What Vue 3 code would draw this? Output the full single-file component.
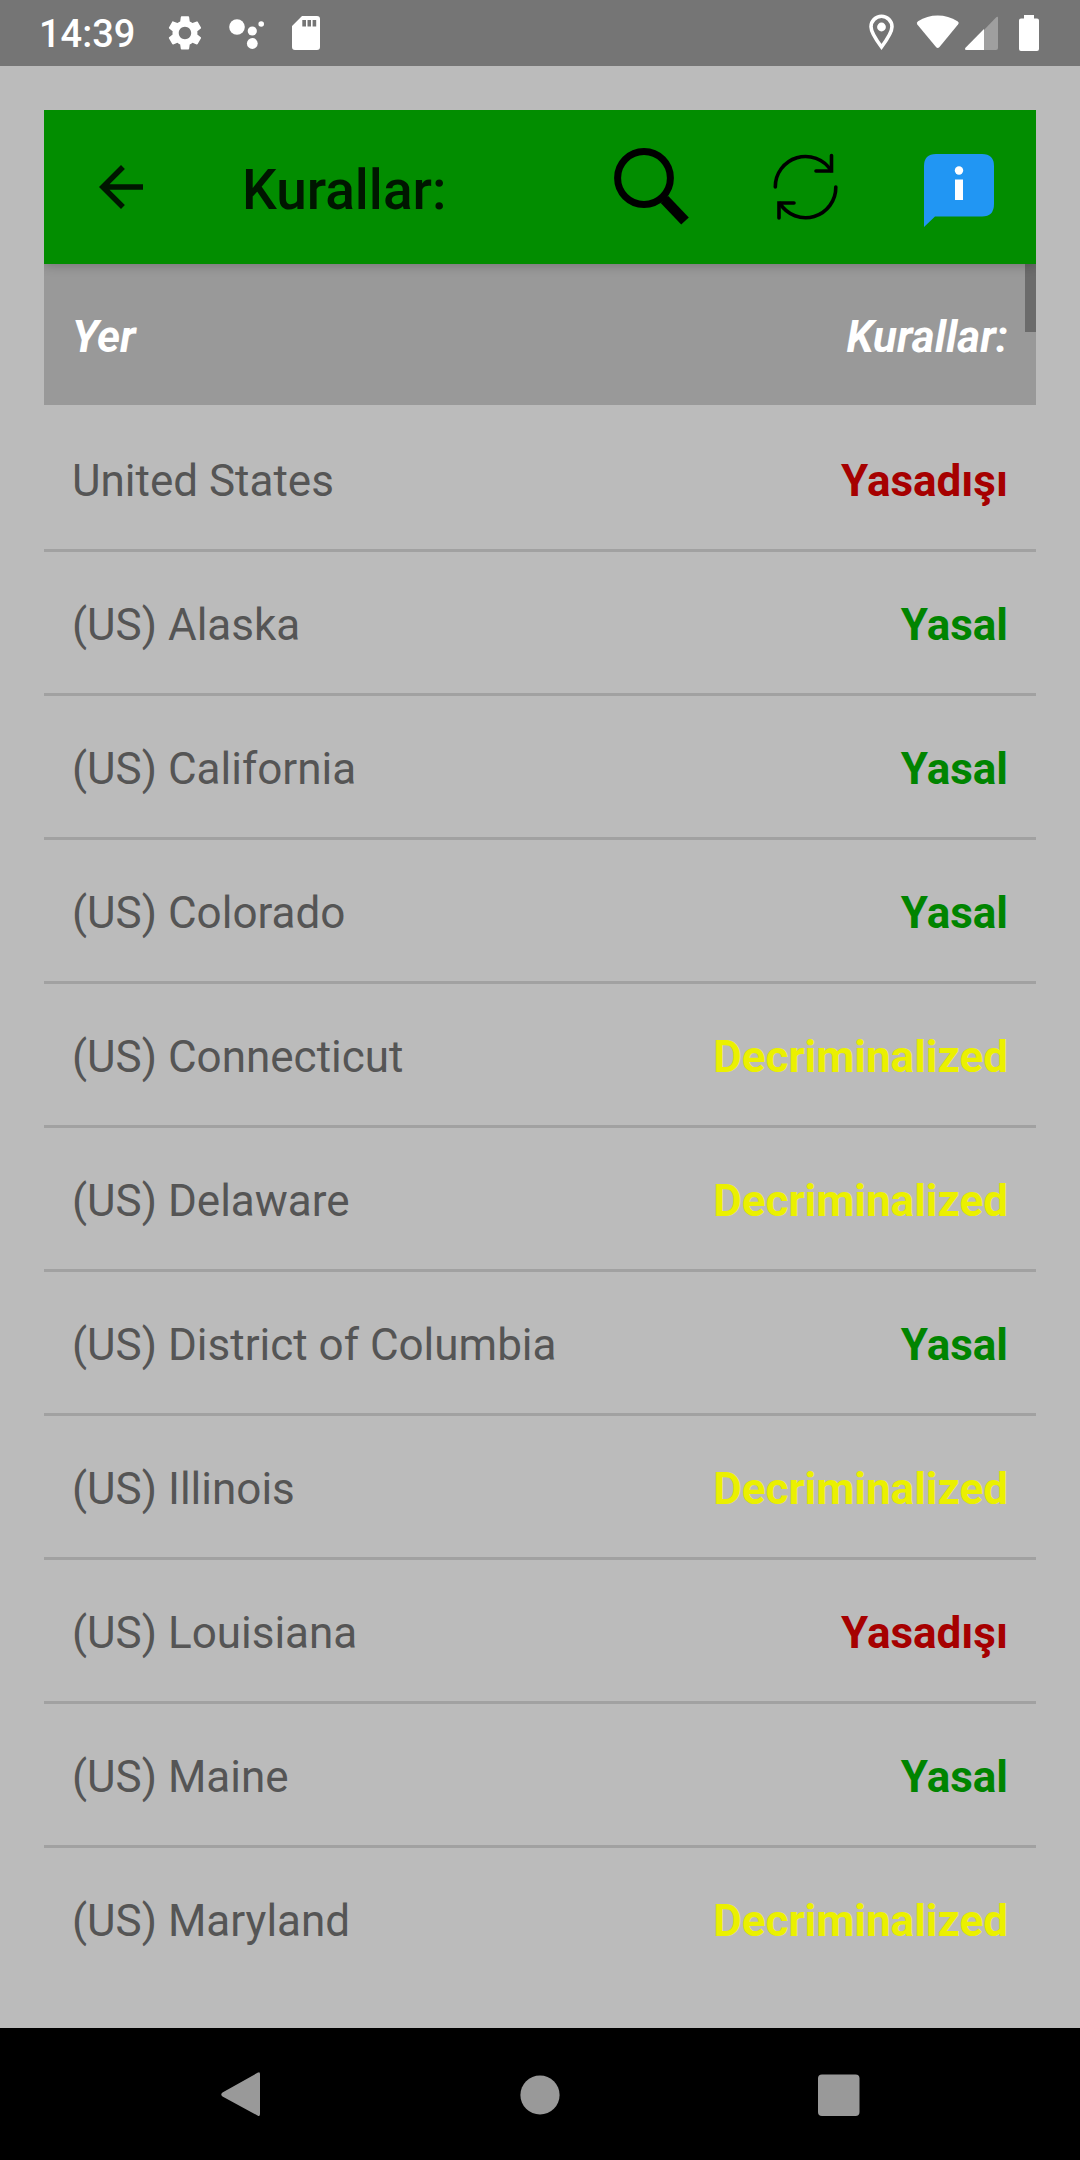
<script setup>
const rules = [
  { place: 'United States', status: 'Yasadışı', tone: 'illegal' },
  { place: '(US) Alaska', status: 'Yasal', tone: 'legal' },
  { place: '(US) California', status: 'Yasal', tone: 'legal' },
  { place: '(US) Colorado', status: 'Yasal', tone: 'legal' },
  { place: '(US) Connecticut', status: 'Decriminalized', tone: 'partial' },
  { place: '(US) Delaware', status: 'Decriminalized', tone: 'partial' },
  { place: '(US) District of Columbia', status: 'Yasal', tone: 'legal' },
  { place: '(US) Illinois', status: 'Decriminalized', tone: 'partial' },
  { place: '(US) Louisiana', status: 'Yasadışı', tone: 'illegal' },
  { place: '(US) Maine', status: 'Yasal', tone: 'legal' },
  { place: '(US) Maryland', status: 'Decriminalized', tone: 'partial' },
]
</script>

<template>
  <div class="screen">
    <header class="status-bar">
      <time class="clock">14:39</time>
      <div class="notifications">
        <svg width="34" height="38" viewBox="0 0 34 38" fill="#fff" aria-hidden="true">
          <path transform="translate(-3.8 -1.8) scale(1.73)" d="M19.14 12.94c.04-.3.06-.61.06-.94 0-.32-.02-.64-.07-.94l2.03-1.58c.18-.14.23-.41.12-.61l-1.92-3.32c-.12-.22-.37-.29-.59-.22l-2.39.96c-.5-.38-1.03-.7-1.62-.94l-.36-2.54c-.04-.24-.24-.41-.48-.41h-3.84c-.24 0-.43.17-.47.41l-.36 2.54c-.59.24-1.13.57-1.62.94l-2.39-.96c-.22-.08-.47 0-.59.22L2.74 8.87c-.12.21-.08.47.12.61l2.03 1.58c-.05.3-.09.63-.09.94s.02.64.07.94l-2.03 1.58c-.18.14-.23.41-.12.61l1.92 3.32c.12.22.37.29.59.22l2.39-.96c.5.38 1.03.7 1.62.94l.36 2.54c.05.24.24.41.48.41h3.84c.24 0 .44-.17.47-.41l.36-2.54c.59-.24 1.13-.56 1.62-.94l2.39.96c.22.08.47 0 .59-.22l1.92-3.32c.12-.22.07-.47-.12-.61l-2.01-1.58zM12 15.6c-1.98 0-3.6-1.62-3.6-3.6s1.62-3.6 3.6-3.6 3.6 1.62 3.6 3.6-1.62 3.6-3.6 3.6z" />
        </svg>
        <svg width="36" height="38" viewBox="0 0 36 38" fill="#fff" aria-hidden="true">
          <circle cx="8" cy="13" r="7.8" /><circle cx="23.3" cy="17" r="4.6" />
          <circle cx="23.3" cy="29.5" r="5.4" /><circle cx="32.2" cy="10" r="2.8" />
        </svg>
        <svg width="28" height="38" viewBox="0 0 28 38" aria-hidden="true">
          <path fill="#fff" fill-rule="evenodd" d="M10 2H25Q28 2 28 5V33Q28 36 25 36H3Q0 36 0 33V12ZM10.300 6V12.500H14V6ZM15.500 6V12.500H19V6ZM20.600 6V12.500H24.200V6Z" />
        </svg>
      </div>
      <div class="system">
        <svg width="26" height="38" viewBox="0 0 26 38" aria-hidden="true">
          <path fill="none" stroke="#fff" stroke-width="3.6" d="M12.500 33C8 27 2 19 2 12.800A10.500 10.500 0 0 1 23 12.800C23 19 17 27 12.500 33Z" />
          <circle cx="12.500" cy="13" r="4.400" fill="#fff" />
        </svg>
        <svg width="44" height="38" viewBox="0 0 44 38" aria-hidden="true">
          <path fill="#fff" d="M1.300 10.500Q0 8.500 2 7.200Q11 1.500 21.700 1.500T41.500 7.200Q43.500 8.500 42 10.500L23.500 33Q21.700 35 20 33Z" />
        </svg>
        <svg class="signal" width="34" height="38" viewBox="0 0 34 38" aria-hidden="true">
          <path fill="#9f9f9f" d="M19 17L31.500 4Q34 1.500 34 4V34Q34 36 32 36H19Z" />
          <path fill="#fff" d="M20 15V36H2.500Q0 36 1.500 33.800Z" />
        </svg>
        <svg width="20" height="38" viewBox="0 0 20 38" aria-hidden="true">
          <path fill="#fff" d="M5 1H15V4.500H18Q20 4.500 20 6.500V35Q20 37 18 37H2Q0 37 0 35V6.500Q0 4.500 2 4.500H5Z" />
        </svg>
      </div>
    </header>

    <main class="content">
      <section class="card">
        <div class="toolbar">
          <button type="button" aria-label="Geri">
            <svg width="66" height="66" viewBox="0 0 24 24" fill="#001600">
              <path d="M20 11H7.830l5.590-5.590L12 4l-8 8 8 8 1.410-1.410L7.830 13H20z" />
            </svg>
          </button>
          <h1 class="title">Kurallar:</h1>
          <div class="actions">
            <button type="button" aria-label="Ara">
              <svg width="74" height="84" viewBox="0 0 74 84" fill="none" stroke="#000">
                <circle cx="30" cy="33" r="26.400" stroke-width="7" />
                <path d="M47 50L54 57" stroke-width="7" />
                <path d="M50.500 54.500L71 76" stroke-width="10.500" />
              </svg>
            </button>
            <button type="button" aria-label="Yenile">
              <svg width="68" height="84" viewBox="0 0 68 84" fill="none" stroke="#000" stroke-width="3.600" stroke-linecap="round">
                <path d="M3.300 42A30.200 30.200 0 0 1 59 25.500M63.800 42A30.200 30.200 0 0 1 8 58.500" />
                <path d="M59.500 10.500V26H44M7 73V58H22" />
              </svg>
            </button>
            <button type="button" aria-label="Bilgi">
              <svg width="70" height="84" viewBox="0 0 70 84">
                <path fill="#2196f3" d="M12 9H58Q70 9 70 21V59Q70 71.500 58 71.500H11L0 82V21Q0 9 12 9Z" />
                <circle cx="35" cy="25.500" r="4.200" fill="#fff" />
                <path fill="#fff" d="M31 34.500H39V55H31Z" />
              </svg>
            </button>
          </div>
        </div>

        <div class="list">
          <table class="rules">
            <thead>
              <tr>
                <th scope="col">Yer</th>
                <th scope="col" class="value">Kurallar:</th>
              </tr>
            </thead>
            <tbody>
              <tr v-for="rule in rules" :key="rule.place">
                <td>{{ rule.place }}</td>
                <td class="value" :class="rule.tone">{{ rule.status }}</td>
              </tr>
            </tbody>
          </table>
          <div class="scroll-thumb"></div>
        </div>
      </section>
    </main>

    <nav class="nav-bar" aria-label="Sistem">
      <button type="button" aria-label="Geri">
        <svg width="48" height="48" viewBox="0 0 48 48"><path fill="#999" d="M40.500 1.800Q43 0 43 3V43Q43 46 40.500 44.500L5.500 25.500Q3 23.500 5.500 21.500Z" /></svg>
      </button>
      <button type="button" aria-label="Ana ekran">
        <svg width="48" height="48" viewBox="0 0 48 48"><circle cx="24" cy="24" r="19.600" fill="#999" /></svg>
      </button>
      <button type="button" aria-label="Son uygulamalar">
        <svg width="48" height="48" viewBox="0 0 48 48"><rect x="3" y="3.500" width="41.500" height="41.500" rx="4" fill="#999" /></svg>
      </button>
    </nav>
  </div>
</template>

<style>
body {
  background: #bbb;
}
</style>

<style scoped>
.screen {
  display: flex;
  flex-direction: column;
  min-height: 100vh;
  background: #bbb;
  font-family: Roboto, "Noto Sans", sans-serif;
}

button {
  display: flex;
  align-items: center;
  justify-content: center;
  padding: 0;
  border: 0;
  background: none;
}

svg {
  display: block;
  flex: none;
  overflow: visible;
}

.status-bar {
  display: flex;
  align-items: center;
  height: 66px;
  padding: 0 41px 0 39px;
  background: #757575;
}

.clock {
  color: #fff;
  font-size: 38px;
  font-weight: 500;
  line-height: 66px;
  padding-top: 2px;
}

.notifications {
  display: flex;
  gap: 27px;
  margin-left: 33px;
}

.system {
  display: flex;
  gap: 21px;
  margin-left: auto;
}

.signal {
  margin-left: -17px;
}

.content {
  flex: 1;
  padding: 44px 44px 36px;
}

.card {
  overflow: hidden;
}

.toolbar {
  position: relative;
  z-index: 1;
  display: flex;
  align-items: center;
  height: 154px;
  padding: 0 42px 0 44px;
  background: #028d00;
  box-shadow: 0 2px 10px rgba(0, 0, 0, 0.22);
}

.title {
  margin: 0 0 0 88px;
  padding-top: 6px;
  color: #001600;
  font-size: 55px;
  font-weight: 500;
  line-height: 64px;
}

.actions {
  display: flex;
  gap: 84px;
  margin-left: auto;
}

.list {
  position: relative;
}

.rules {
  width: 100%;
  border-spacing: 0;
  color: #555;
  font-size: 44px;
  line-height: 52px;
}

th,
td {
  box-sizing: border-box;
  padding: 5px 28px 0;
  text-align: left;
  vertical-align: middle;
}

th {
  height: 141px;
  background: #999;
  color: #fff;
  font-style: italic;
  font-weight: 700;
}

td {
  height: 144px;
  border-top: 3px solid #a1a1a1;
}

tbody tr:first-child td {
  border-top-color: transparent;
}

.value {
  text-align: right;
}

td.value {
  font-weight: 700;
}

.illegal {
  color: #a60000;
}

.legal {
  color: #008400;
}

.partial {
  color: #ebf000;
}

.scroll-thumb {
  position: absolute;
  top: 0;
  right: 0;
  width: 11px;
  height: 68px;
  background: #6b6b6b;
}

.nav-bar {
  display: grid;
  grid-template-columns: repeat(3, 1fr);
  box-sizing: border-box;
  height: 132px;
  padding: 2px 8.5% 0;
  background: #000;
}
</style>
